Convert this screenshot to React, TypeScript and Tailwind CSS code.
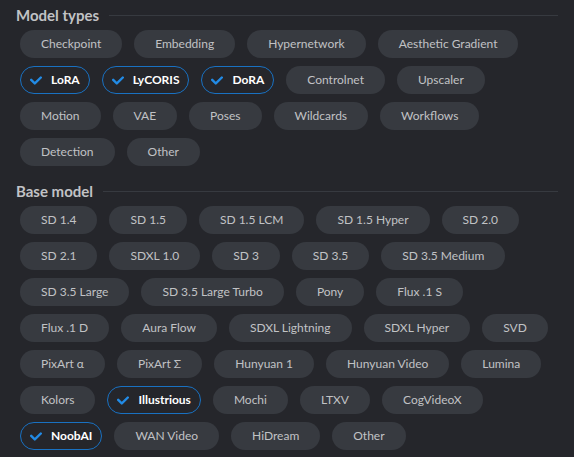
type ChipItem = { label: string; checked?: boolean }

const modelTypes: ChipItem[][] = [
  [{ label: "Checkpoint" }, { label: "Embedding" }, { label: "Hypernetwork" }, { label: "Aesthetic Gradient" }],
  [
    { label: "LoRA", checked: true },
    { label: "LyCORIS", checked: true },
    { label: "DoRA", checked: true },
    { label: "Controlnet" },
    { label: "Upscaler" },
  ],
  [{ label: "Motion" }, { label: "VAE" }, { label: "Poses" }, { label: "Wildcards" }, { label: "Workflows" }],
  [{ label: "Detection" }, { label: "Other" }],
]

const baseModels: ChipItem[][] = [
  [{ label: "SD 1.4" }, { label: "SD 1.5" }, { label: "SD 1.5 LCM" }, { label: "SD 1.5 Hyper" }, { label: "SD 2.0" }],
  [{ label: "SD 2.1" }, { label: "SDXL 1.0" }, { label: "SD 3" }, { label: "SD 3.5" }, { label: "SD 3.5 Medium" }],
  [{ label: "SD 3.5 Large" }, { label: "SD 3.5 Large Turbo" }, { label: "Pony" }, { label: "Flux .1 S" }],
  [{ label: "Flux .1 D" }, { label: "Aura Flow" }, { label: "SDXL Lightning" }, { label: "SDXL Hyper" }, { label: "SVD" }],
  [{ label: "PixArt α" }, { label: "PixArt Σ" }, { label: "Hunyuan 1" }, { label: "Hunyuan Video" }, { label: "Lumina" }],
  [
    { label: "Kolors" },
    { label: "Illustrious", checked: true },
    { label: "Mochi" },
    { label: "LTXV" },
    { label: "CogVideoX" },
  ],
  [{ label: "NoobAI", checked: true }, { label: "WAN Video" }, { label: "HiDream" }, { label: "Other" }],
]

function CheckIcon() {
  return (
    <svg width="12" height="9" viewBox="0 0 10 7" fill="#228be6" className="shrink-0">
      <path d="M4 4.586L1.707 2.293A1 1 0 1 0 .293 3.707l3 3a.997.997 0 0 0 1.414 0l5-5A1 1 0 1 0 8.293.293L4 4.586z" />
    </svg>
  )
}

function Chip({ label, checked }: ChipItem) {
  if (checked) {
    return (
      <div className="flex h-7 items-center gap-[9px] rounded-full border border-[#1971c2] px-[9px] text-[12px] font-bold whitespace-nowrap text-white">
        <CheckIcon />
        <span>{label}</span>
      </div>
    )
  }
  return (
    <div className="flex h-7 items-center rounded-full border border-transparent bg-[#373a40] px-5 text-[12px] whitespace-nowrap text-[#c1c2c5]">
      {label}
    </div>
  )
}

function Section({ title, rows }: { title: string; rows: ChipItem[][] }) {
  return (
    <div>
      <div className="flex h-5 items-center gap-[10px]">
        <span className="text-[15px] font-bold text-[#c1c2c5]">{title}</span>
        <div className="h-px flex-1 bg-[#373a40]" />
      </div>
      <div className="mt-[5px] flex flex-col gap-2 pl-1">
        {rows.map((row, r) => (
          <div key={r} className="flex gap-3">
            {row.map((item, idx) => (
              <Chip key={idx} label={item.label} checked={item.checked} />
            ))}
          </div>
        ))}
      </div>
    </div>
  )
}

export default function App() {
  return (
    <div
      className="min-h-[457px] bg-[#25262b] px-4 pt-[5px]"
      style={{ fontFamily: 'Lato, "Noto Sans", sans-serif' }}
    >
      <div className="flex flex-col gap-[15px]">
        <Section title="Model types" rows={modelTypes} />
        <Section title="Base model" rows={baseModels} />
      </div>
    </div>
  )
}
